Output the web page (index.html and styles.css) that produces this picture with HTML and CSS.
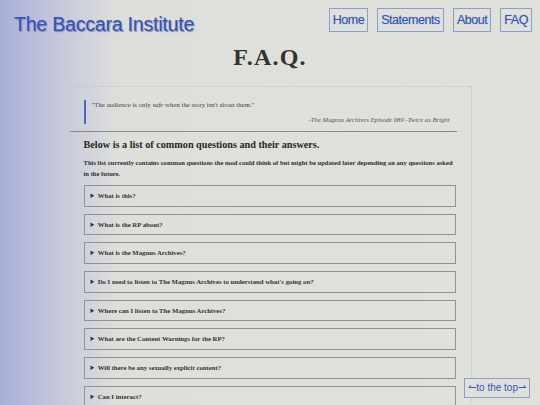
FILE: index.html
```
<!DOCTYPE html>
<html>
<head>
<meta charset="utf-8">
<link rel="stylesheet" href="styles.css">
</head>
<body>
<header class="top">
  <div class="brand">The Baccara Institute</div>
  <nav class="nav">
    <a class="btn">Home</a>
    <a class="btn">Statements</a>
    <a class="btn">About</a>
    <a class="btn">FAQ</a>
  </nav>
</header>
<h1 class="title">F.A.Q.</h1>
<main class="content">
  <blockquote class="quote">
    <p class="quote-text">"The audience is only <em>safe</em> when the story isn't about them."</p>
    <p class="quote-src">-The Magnus Archives Episode 089 -Twice as Bright</p>
  </blockquote>
  <hr class="rule">
  <h2 class="lead">Below is a list of common questions and their answers.</h2>
  <p class="intro">This list currently contains common questions the mod could think of but might be updated later depending on any questions asked in the future.</p>
  <details class="q"><summary>What is this?</summary></details>
  <details class="q"><summary>What is the RP about?</summary></details>
  <details class="q"><summary>What is the Magnus Archives?</summary></details>
  <details class="q"><summary>Do I need to listen to The Magnus Archives to understand what's going on?</summary></details>
  <details class="q"><summary>Where can I listen to The Magnus Archives?</summary></details>
  <details class="q"><summary>What are the Content Warnings for the RP?</summary></details>
  <details class="q"><summary>Will there be any sexually explicit content?</summary></details>
  <details class="q"><summary>Can I interact?</summary></details>
</main>
<a class="totop">↼to the top⇀</a>
</body>
</html>
```
FILE: styles.css
```
html, body {
  margin: 0;
  padding: 0;
  height: 100%;
  overflow: hidden;
}
body {
  background: linear-gradient(to right, #a9afd8 0px, #c6c9dc 60px, #dedfdb 120px, #e1e1dc 100%);
  font-family: "Liberation Serif", "Times New Roman", serif;
  color: #2a2a2a;
}
.top {
  display: flex;
  justify-content: space-between;
  align-items: flex-start;
  padding: 8px 8px 0 14px;
}
.brand {
  font-family: "Liberation Sans", Arial, sans-serif;
  font-size: 19.5px;
  color: #3154c0;
  text-shadow: 1px 1px 1px #7f86a6;
  margin-top: 5px;
  letter-spacing: -0.2px;
}
.nav {
  display: flex;
  gap: 9px;
}
.btn {
  font-family: "Liberation Sans", Arial, sans-serif;
  font-size: 12.5px;
  color: #3154c0;
  border: 1px solid #8a9ed0;
  padding: 3px 3px;
  line-height: 16px;
  letter-spacing: -0.45px;
  text-shadow: 0 0 1px #9aa6cc;
}
.title {
  margin: 7px 0 0;
  text-align: center;
  font-size: 24px;
  font-weight: bold;
  letter-spacing: 1.2px;
  color: #333;
  line-height: 28px;
}
.content {
  width: 372px;
  margin: 15px auto 0;
  border: 1px dotted #c4c4c0;
  border-bottom: none;
  padding: 13px 15px 0 14px;
}
.quote {
  margin: 0;
  border-left: 2px solid #4a66c8;
  padding: 0 6px;
}
.quote-text {
  margin: 0;
  font-size: 6.8px;
  color: #444;
  line-height: 9px;
}
.quote-src {
  margin: 6px 0 0;
  text-align: right;
  font-size: 6.7px;
  font-style: italic;
  color: #555;
  line-height: 9px;
}
.rule {
  margin: 7px -1px 0 -14px;
  border: none;
  border-top: 1px solid #8a8a86;
  height: 0;
}
.lead {
  margin: 6px 0 0;
  font-size: 10.2px;
  line-height: 14px;
  color: #262626;
}
.intro {
  margin: 4.5px 0 0;
  font-size: 6.6px;
  font-weight: bold;
  line-height: 11px;
  color: #2e2e2e;
}
.q {
  margin-top: 7px;
  border: 1px solid #929290;
  box-sizing: border-box;
  height: 21.7px;
}
.intro + .q {
  margin-top: 6.5px;
}
.q summary {
  font-size: 6.75px;
  font-weight: bold;
  color: #333;
  padding: 0 0 0 6px;
  line-height: 20px;
  cursor: pointer;
}
.totop {
  position: fixed;
  right: 10px;
  bottom: 7px;
  font-family: "Liberation Sans", Arial, sans-serif;
  font-size: 10px;
  color: #3154c0;
  border: 1px solid #8a9ed0;
  padding: 3px 3px;
  line-height: 12px;
  background: #e1e1dc;
}
```
